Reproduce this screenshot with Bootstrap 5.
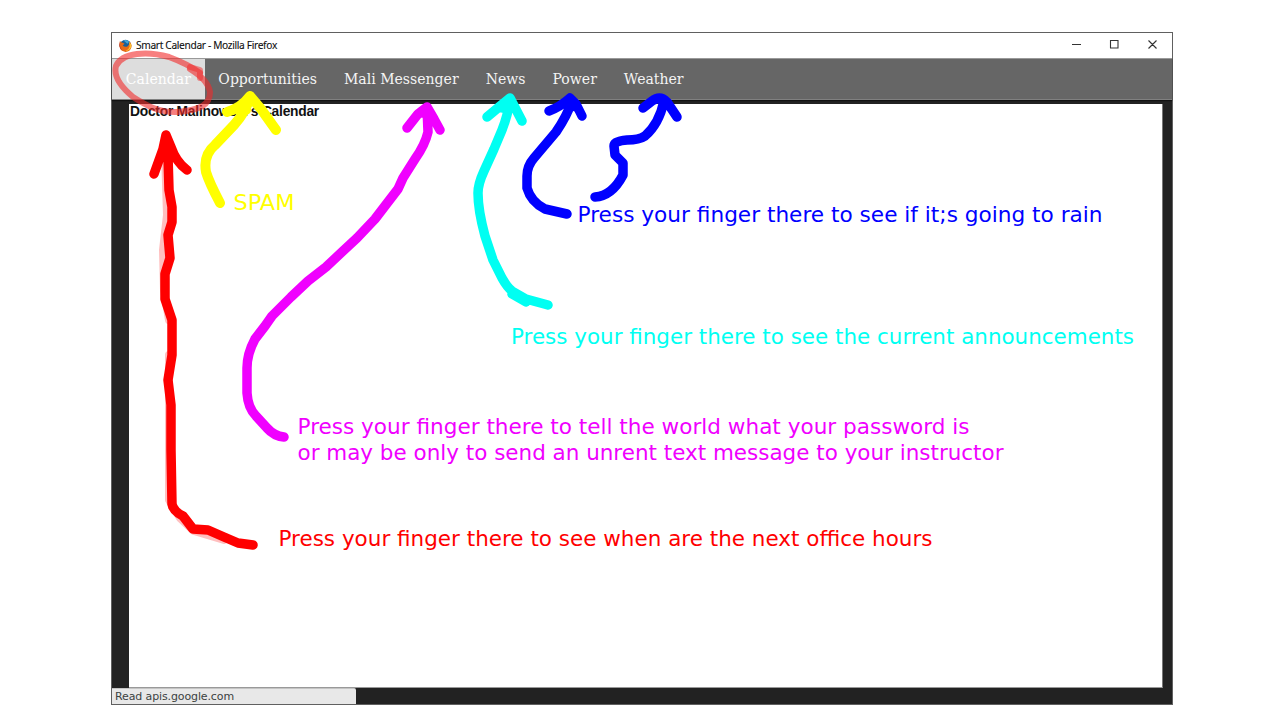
<!DOCTYPE html>
<html lang="en">
<head>
<meta charset="utf-8">
<title>Smart Calendar</title>
<link rel="stylesheet" href="https://cdn.jsdelivr.net/npm/bootstrap@5.3.0/dist/css/bootstrap.min.css">
<style>
body{background:#fff;width:1280px;height:720px;overflow:hidden}
.app-window{width:1062px;height:673px;margin:32px 0 0 111px;border:1px solid #606060;background:#222}
.title-bar{height:25px;padding:0 14px 0 7px;color:#111}
.title-name{margin-left:4px;font:10.2px/23px "Noto Sans",sans-serif;letter-spacing:-.34px;-webkit-text-stroke:.1px #111}
.window-buttons{margin-top:-3px}
.tab-bar{height:42px;background:#666;border-top:1px solid #999;border-bottom:1px solid #808080;font:14.05px "DejaVu Serif",serif;box-shadow:0 1px 1px #111}
.tab-bar .nav-link{height:40px;padding:0 13.5px;line-height:40px;color:#f4f4f4;white-space:nowrap}
.tab-bar .nav-link.active{background:#ddd;color:#fff;padding:0 14px 0 13.8px}
.page-area{height:584px;margin:4px 9px 0 17px;background:#fff;border-bottom:1px solid #999;border-right:1px solid #777}
.page-title{font:bold 13.8px/15px "Liberation Sans",sans-serif;letter-spacing:-.24px;color:#111;padding:0 0 0 1px;white-space:nowrap}
.status-line{width:244px;height:16px;background:#e8e8e8;border-top:1px solid #c4c4c4;font:11px/16px "DejaVu Sans",sans-serif;letter-spacing:-.12px;color:#3c4242;padding-left:3px;border-radius:0 2px 0 0}
.notes{left:0;top:0;pointer-events:none}
.notes text{font:21.3px "DejaVu Sans",sans-serif}
.notes path{fill:none;stroke-linecap:round;stroke-linejoin:round}
</style>
</head>
<body class="position-relative">
<main class="app-window">
  <header class="title-bar d-flex align-items-center bg-white">
    <svg width="13" height="13" viewBox="0 0 14 14" aria-hidden="true">
      <circle cx="7" cy="7" r="6.2" fill="#176099"/>
      <path d="M5 1.5Q8 0 11 3L9 5Z" fill="#40a5d7"/>
      <path d="M1 2Q2 4 4 4L6 5 4 7Q6 9 9 8 12 6 11 2.5 14 5 13.4 9 12 14 7 14 0 13 .5 6Z" fill="#e66a17"/>
      <path d="M11 3Q14 6 13 9 11 13 7 13 11 11 11.5 8Z" fill="#ffc12b"/>
      <path d="M1 3Q0 10 5 13L2 11Q-1 7 1 3Z" fill="#bd3524"/>
    </svg>
    <span class="title-name">Smart Calendar - Mozilla Firefox</span>
    <svg class="window-buttons ms-auto" width="88" height="12" viewBox="0 0 88 12" fill="none" stroke="#333" stroke-width="1.1" aria-hidden="true">
      <path d="M2 6.500h9M40.500 2.500h7.500v7.500h-7.500zM78.500 2.500l8 8m0-8l-8 8"/>
    </svg>
  </header>
  <nav class="tab-bar nav flex-nowrap">
    <a class="nav-link active">Calendar</a>
    <a class="nav-link">Opportunities</a>
    <a class="nav-link">Mali Messenger</a>
    <a class="nav-link">News</a>
    <a class="nav-link">Power</a>
    <a class="nav-link">Weather</a>
  </nav>
  <section class="page-area"><h1 class="page-title m-0">Doctor Malinowski's Calendar</h1></section>
  <footer class="status-line">Read apis.google.com</footer>
</main>
<svg class="notes position-absolute" width="1280" height="720" viewBox="0 0 1280 720">
  <defs><filter id="soft" x="0" y="0" width="1280" height="720" filterUnits="userSpaceOnUse" color-interpolation-filters="sRGB"><feGaussianBlur stdDeviation=".75"/></filter></defs>
  <g filter="url(#soft)">
    <path stroke="#f22a2a" stroke-opacity=".6" stroke-width="6" d="M200 73Q188 64 169 57C148 51 122 52 116 66C113 77 121 87 133 97C147 106 160 113 178 112C200 110 210 105 210 92C208 82 201 76 190 69"/>
    <path stroke="#f22a2a" stroke-opacity=".5" stroke-width="6" d="M190 67l10 3v8"/>
    <path stroke="#f00" stroke-opacity=".25" stroke-width="8" d="M165 152L167 215 163 250 164 290 169 320M169 355V500L180 518 194 531 224 540"/>
    <path stroke="#f00" stroke-width="9.500" d="M154 174L163 149 166 135 171 147Q176 162 187 170M166 135L168 156 169 190 172 207 172 222 168 235 170 258 165 274 165 299 172 320 172 355 168 380 171 405 171 450 172 504Q173 511 183 516L193 529 208 530 224 537 238 543 253 545M164 148l6 3"/>
    <path stroke="#ff0" stroke-width="10" d="M227 112Q241 108 250 96L261 109 276 130M250 97Q246 112 234 125L215 145Q203 155 206 172Q209 182 220 203M238 110l8 0"/>
    <path stroke="#f000ff" stroke-width="9.500" d="M407 128L418 114 427 107 434 119 440 130M427 107L428 132Q425 145 415 159L403 178 398 189 388 202 375 219 357 238 343 251 326 267 308 281 291 297 272 316 265 326 255 339Q247 354 247 368L247 393Q248 408 256 416L267 428Q274 436 284 437M422 113h7"/>
    <path stroke="#00fff2" stroke-width="9.500" d="M487 117L499 107 510 98 522 121M510 99Q508 115 502 130L494 149 484 171Q478 184 478 193Q478 210 485 236L493 260 502 278Q507 287 512 291L526 299 548 305M512 294L526 302M502 108h6"/>
    <path stroke="#00f" stroke-width="9.500" d="M549 111Q560 107 570 98L576 104 582 116M572 101Q567 116 556 132L534 158Q527 166 527 176L527 188Q531 202 545 209L567 214M565 104l6-3 5 6"/>
    <path stroke="#00f" stroke-width="9.500" d="M643 108L652 101Q660 95 667 102L677 117M664 101Q659 124 645 136Q639 140 627 140Q614 141 614 146L615 155 623 163 623 175Q612 196 595 197"/>
  </g>
  <text x="233.500" y="210" fill="#ff0" textLength="61" lengthAdjust="spacingAndGlyphs">SPAM</text>
  <text x="577.500" y="222" fill="#00f" textLength="525" lengthAdjust="spacingAndGlyphs">Press your finger there to see if it;s going to rain</text>
  <text x="511" y="343.500" fill="#00fff2" textLength="623" lengthAdjust="spacingAndGlyphs">Press your finger there to see the current announcements</text>
  <text x="297.500" y="434" fill="#f000ff" textLength="672" lengthAdjust="spacingAndGlyphs">Press your finger there to tell the world what your password is</text>
  <text x="297.500" y="460" fill="#f000ff" textLength="706" lengthAdjust="spacingAndGlyphs">or may be only to send an unrent text message to your instructor</text>
  <text x="278.500" y="546" fill="#f00" textLength="654" lengthAdjust="spacingAndGlyphs">Press your finger there to see when are the next office hours</text>
</svg>
<script src="https://cdn.jsdelivr.net/npm/bootstrap@5.3.0/dist/js/bootstrap.bundle.min.js"></script>
</body>
</html>
